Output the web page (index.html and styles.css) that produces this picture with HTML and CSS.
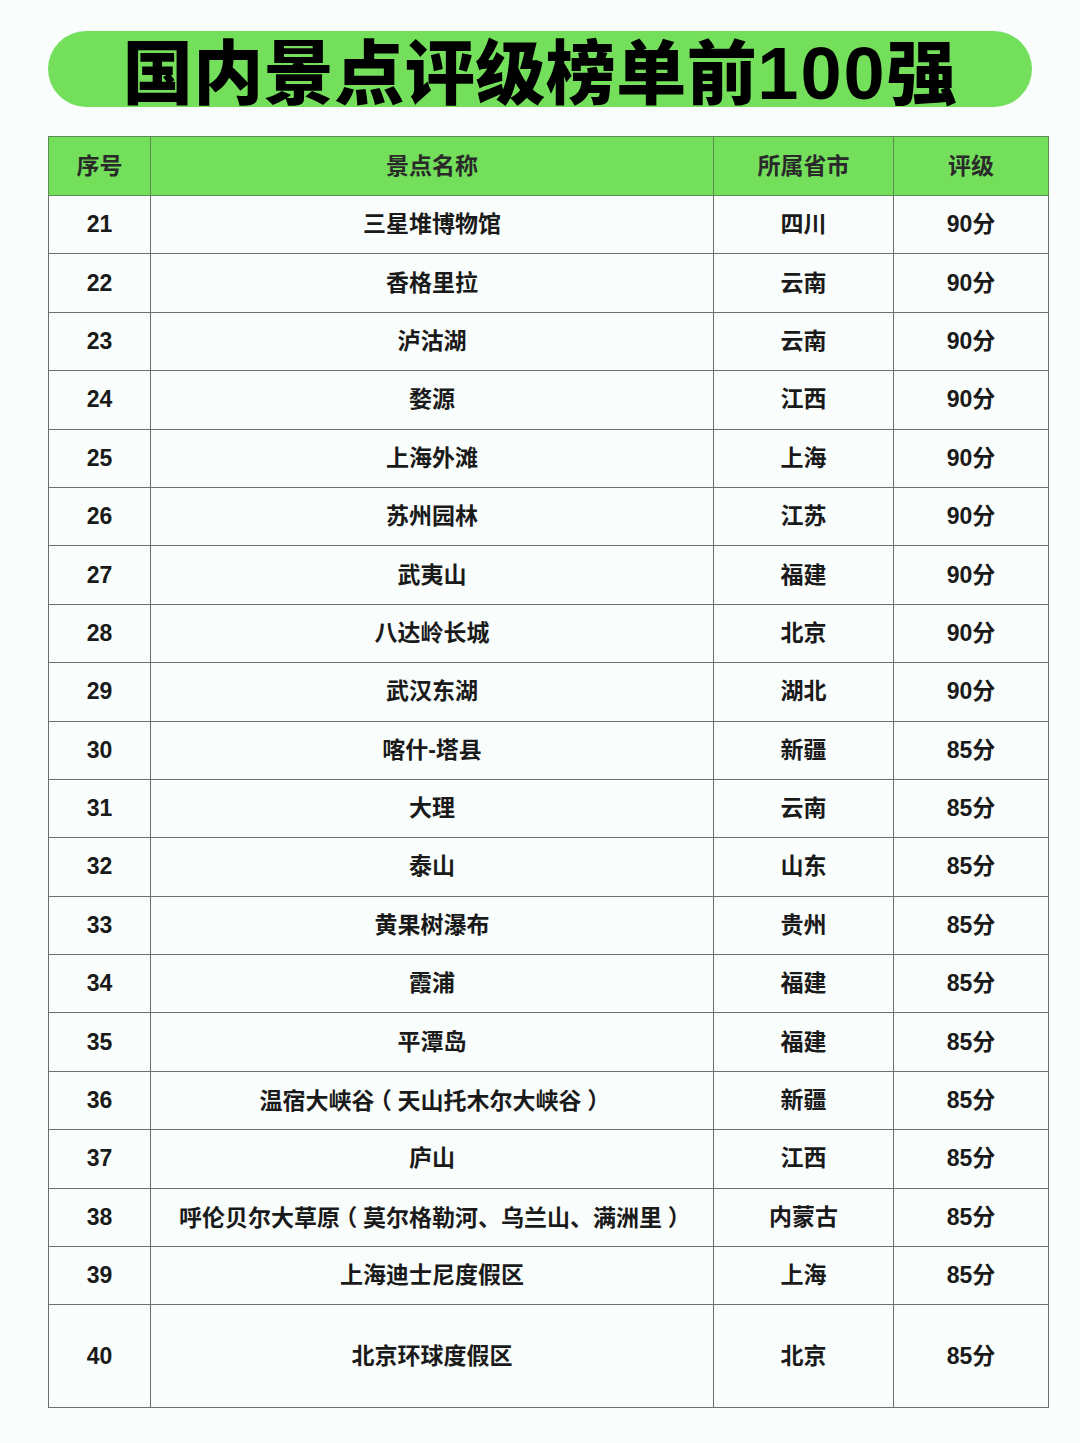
FILE: index.html
```html
<!DOCTYPE html>
<html lang="zh">
<head>
<meta charset="utf-8">
<link rel="stylesheet" href="styles.css">
</head>
<body>
<div class="page">
  <h1 class="title">国内景点评级榜单前<span class="num">100</span>强</h1>
  <table class="rank">
    <colgroup>
      <col class="c-no"><col class="c-name"><col class="c-prov"><col class="c-score">
    </colgroup>
    <thead>
      <tr><th>序号</th><th>景点名称</th><th>所属省市</th><th>评级</th></tr>
    </thead>
    <tbody>
      <tr><td>21</td><td>三星堆博物馆</td><td>四川</td><td>90分</td></tr>
      <tr><td>22</td><td>香格里拉</td><td>云南</td><td>90分</td></tr>
      <tr><td>23</td><td>泸沽湖</td><td>云南</td><td>90分</td></tr>
      <tr><td>24</td><td>婺源</td><td>江西</td><td>90分</td></tr>
      <tr><td>25</td><td>上海外滩</td><td>上海</td><td>90分</td></tr>
      <tr><td>26</td><td>苏州园林</td><td>江苏</td><td>90分</td></tr>
      <tr><td>27</td><td>武夷山</td><td>福建</td><td>90分</td></tr>
      <tr><td>28</td><td>八达岭长城</td><td>北京</td><td>90分</td></tr>
      <tr><td>29</td><td>武汉东湖</td><td>湖北</td><td>90分</td></tr>
      <tr><td>30</td><td>喀什-塔县</td><td>新疆</td><td>85分</td></tr>
      <tr><td>31</td><td>大理</td><td>云南</td><td>85分</td></tr>
      <tr><td>32</td><td>泰山</td><td>山东</td><td>85分</td></tr>
      <tr><td>33</td><td>黄果树瀑布</td><td>贵州</td><td>85分</td></tr>
      <tr><td>34</td><td>霞浦</td><td>福建</td><td>85分</td></tr>
      <tr><td>35</td><td>平潭岛</td><td>福建</td><td>85分</td></tr>
      <tr><td>36</td><td>温宿大峡谷<span class="pp">（</span>天山托木尔大峡谷<span class="pp">）</span></td><td>新疆</td><td>85分</td></tr>
      <tr><td>37</td><td>庐山</td><td>江西</td><td>85分</td></tr>
      <tr><td>38</td><td>呼伦贝尔大草原<span class="pp">（</span>莫尔格勒河<span class="pc">、</span>乌兰山<span class="pc">、</span>满洲里<span class="pp">）</span></td><td>内蒙古</td><td>85分</td></tr>
      <tr><td>39</td><td>上海迪士尼度假区</td><td>上海</td><td>85分</td></tr>
      <tr class="tall"><td>40</td><td>北京环球度假区</td><td>北京</td><td>85分</td></tr>
    </tbody>
  </table>
</div>
</body>
</html>
```

FILE: styles.css
```css
html, body {
  margin: 0;
  padding: 0;
  background: #f9fdfb;
}
body {
  font-family: "Noto Sans CJK SC", sans-serif;
  color: #1a1a1a;
}
.page {
  width: 1080px;
  height: 1443px;
  padding-top: 31px;
  box-sizing: border-box;
}
.title {
  margin: 0 0 0 48px;
  width: 984px;
  height: 76px;
  border-radius: 38px;
  background: #73df5b;
  color: #000;
  font-family: "Noto Sans CJK SC", sans-serif;
  font-weight: 900;
  font-size: 70px;
  line-height: 76px;
  text-align: center;
  letter-spacing: 0.5px;
}
.title .num {
  font-family: "Liberation Sans", sans-serif;
  font-weight: bold;
  font-size: 74px;
  letter-spacing: 2px;
}
.rank {
  margin: 29px 0 0 48px;
  width: 1000px;
  border-collapse: collapse;
  table-layout: fixed;
  font-family: "Liberation Sans", "Noto Sans CJK SC", sans-serif;
  font-weight: bold;
  font-size: 23px;
  line-height: 1;
}
.rank .pc {
  font-family: "Noto Sans CJK SC", sans-serif;
  display: inline-block;
  width: 1em;
  text-align: left;
}
.rank .pp {
  font-family: "Noto Sans CJK SC", sans-serif;
  font-feature-settings: "halt";
  display: inline-block;
  width: 1em;
  text-align: center;
}
.c-no { width: 102px; }
.c-name { width: 563px; }
.c-prov { width: 180px; }
.c-score { width: 155px; }
.rank th, .rank td {
  border: 1.5px solid #6e6e6e;
  text-align: center;
  vertical-align: middle;
  padding: 0;
}
.rank th {
  background: #73df5b;
  height: 58px;
  color: #2a2a2a;
  font-weight: bold;
  border-color: #5e8a55;
}
.rank td {
  height: 58.4px;
  box-sizing: border-box;
  background: #f9fdfb;
}
.rank tr.tall td {
  height: 103px;
}
```
